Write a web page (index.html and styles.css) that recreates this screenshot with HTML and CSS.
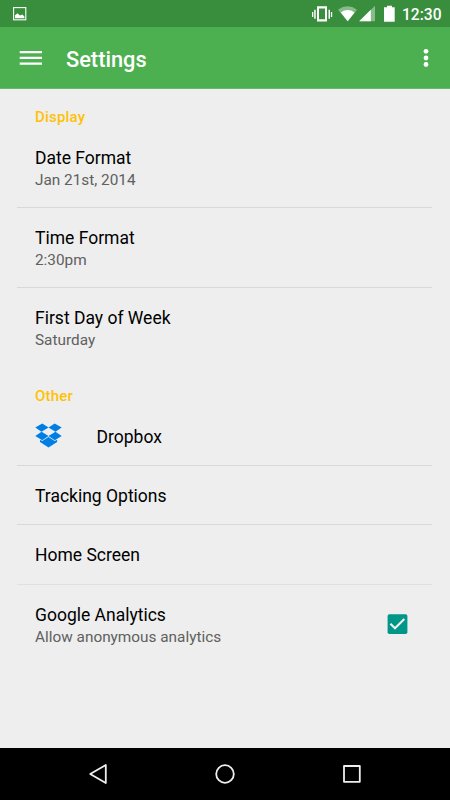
FILE: index.html
```html
<!DOCTYPE html>
<html lang="en">
<head>
<meta charset="utf-8">
<title>Settings</title>
<link rel="stylesheet" href="styles.css">
</head>
<body>
<div class="screen">
  <div class="statusbar">
    <svg class="status-left" width="14" height="14" viewBox="0 0 14 14"><rect x=".6" y=".6" width="12.2" height="12.2" fill="none" stroke="#fff" stroke-width="1.1"/><path d="M2 11.2V8.2L4.5 6.2L7 8.6L9.3 7.6L11.4 9.4V11.2Z" fill="#fff"/></svg>
    <svg class="status-icons" width="84" height="18" viewBox="0 0 84 18" fill="#fff">
      <path d="M5 1.2H15V16.6H5ZM7 3.6V14.3H13V3.6Z" fill-rule="evenodd"/>
      <path d="M2.2 4.8h1.5v9H2.2zM0 7h1.3v5H0zM16.5 4.8H18v9h-1.5zM18.9 7h1.3v5h-1.3z"/>
      <path d="M26 4.7Q35.5-2.2 45 4.7L35.7 16.2Z" opacity=".4"/>
      <path d="M28.8 7.4Q35.5 2.7 42.6 7.4L35.7 16.2Z"/>
      <path d="M47.2 16.2L63 .8V16.2Z" opacity=".4"/>
      <path d="M47.2 16.2L58.8 4.8V16.2Z"/>
      <path d="M72 2.2h3V.7h5v1.5h2.7V16.8H72Z"/>
    </svg>
    <span class="clock">12:30</span>
  </div>
  <header class="appbar">
    <svg class="menu" width="24" height="16" viewBox="0 0 24 16" fill="#fff"><path d="M.7 1H23v2.2H.7zM.7 6.8H23V9H.7zM.7 12.5H23v2.2H.7z"/></svg>
    <h1>Settings</h1>
    <svg class="more" width="6" height="20" viewBox="0 0 6 20" fill="#fff"><circle cx="3" cy="3.3" r="2.4"/><circle cx="3" cy="10" r="2.4"/><circle cx="3" cy="16.5" r="2.4"/></svg>
  </header>
  <main>
    <h2>Display</h2>
    <div class="row double line"><div class="title">Date Format</div><div class="sub">Jan 21st, 2014</div></div>
    <div class="row double line"><div class="title">Time Format</div><div class="sub">2:30pm</div></div>
    <div class="row double"><div class="title">First Day of Week</div><div class="sub">Saturday</div></div>
    <h2>Other</h2>
    <div class="row dropbox line">
      <svg width="27" height="25" viewBox="0 0 26 25" preserveAspectRatio="none" fill="#007ee5"><path d="M7 .5L13 4.5L6.3 8.8L.3 4.6ZM19 .5L25.7 4.6L19.7 8.8L13 4.5ZM.3 13L6.3 8.8L13 13L7 17.2ZM13 13L19.7 8.8L25.7 13L19 17.2Z"/><path d="M13 14L19 18L21.3 16.8V19.1L13 24.4L4.8 19.1V16.8L7 18Z"/></svg>
      <div class="title">Dropbox</div>
    </div>
    <div class="row single line"><div class="title">Tracking Options</div></div>
    <div class="row single line last"><div class="title">Home Screen</div></div>
    <div class="row analytics">
      <div><div class="title">Google Analytics</div><div class="sub">Allow anonymous analytics</div></div>
      <svg class="check" width="21" height="21" viewBox="0 0 21 21"><rect x=".6" y=".2" width="19.8" height="19.8" rx="1.8" fill="#009688"/><path d="M3.4 9.8L8 14.3L17.3 5" fill="none" stroke="#eee" stroke-width="2.2"/></svg>
    </div>
  </main>
  <nav class="navbar">
    <svg width="20" height="22" viewBox="0 0 20 22"><path d="M17.8 2V20L2.2 11Z"/></svg>
    <svg width="22" height="22" viewBox="0 0 22 22"><circle cx="11" cy="11" r="8.8"/></svg>
    <svg width="20" height="20" viewBox="0 0 20 20"><rect x="2" y="2" width="15.8" height="15.8"/></svg>
  </nav>
</div>
</body>
</html>
```
FILE: styles.css
```css
* { box-sizing: border-box; }
body { margin: 0; font-family: Roboto, sans-serif; background: #eee; }
.screen { width: 450px; height: 800px; display: flex; flex-direction: column; overflow: hidden; }
.statusbar { height: 27px; background: #388e3c; display: flex; align-items: flex-start; flex: none; }
.status-left { margin: 7px 0 0 13px; }
.status-icons { margin: 5px 0 0 285px; }
.clock { margin: 5px 0 0 6px; color: #fff; font-size: 15.6px; line-height: 20px; font-weight: 500; }
.appbar { height: 62px; flex: none; background: #4caf50; border-bottom: 1px solid #68b96b; color: #fff; display: flex; align-items: center; padding: 0 21px 0 19px; }
h1 { margin: 5px auto 0 23px; font-size: 21.8px; line-height: 28px; font-weight: 500; }
.menu, .more { margin-top: 1px; }
main { flex: 1; padding: 0 18px 0 17px; }
h2 { margin: 0; height: 39px; padding: 18px 0 0 18px; font-size: 15px; letter-spacing: .2px; line-height: 20px; font-weight: 500; color: #ffc107; }
.row { padding-left: 18px; }
.line { border-bottom: 1px solid #d8d8d8; }
.title { font-size: 17.5px; line-height: 22px; color: #000; white-space: nowrap; }
.sub { font-size: 15.35px; line-height: 22px; color: #606060; white-space: nowrap; }
.double { height: 80px; padding-top: 19px; }
.dropbox { height: 59px; display: flex; align-items: center; }
.dropbox svg { margin-top: -1px; }
.dropbox .title { margin: 1px 0 0 34.5px; }
.single { height: 59px; padding-top: 19px; }
.last { height: 60px; border-bottom-color: #e0e0e0; }
.analytics { display: flex; justify-content: space-between; padding-top: 19px; padding-right: 24px; }
.check { margin-top: 10px; }
.navbar { height: 52px; flex: none; background: #000; display: flex; align-items: center; justify-content: space-between; padding: 0 88px; }
.navbar svg { fill: none; stroke: #eee; stroke-width: 1.8; stroke-linejoin: round; }
```
